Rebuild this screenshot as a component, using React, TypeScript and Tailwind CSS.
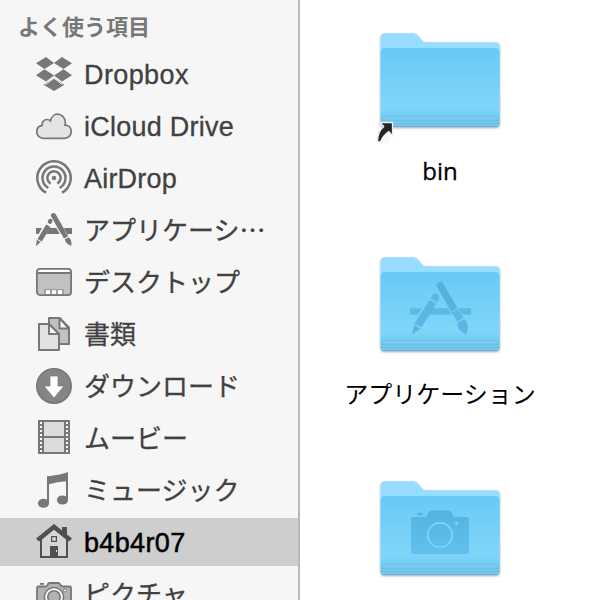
import React from "react";

const g = "#777777";

function DropboxIcon() {
  return (
    <g fill={g}>
      <path d="M10 7L18 13L8.5 19L0 13.3Z" />
      <path d="M26 7L18 13L27.5 19L36 13.3Z" />
      <path d="M8.5 19.3L18 25.5L10 31.5L0 25.3Z" />
      <path d="M27.5 19.3L18 25.5L26 31.5L36 25.3Z" />
      <path d="M18 28L28.5 34.8L18 41L7.5 34.8Z" />
      <path d="M7 32.4L10.2 34.2L18 28.2L25.8 34.2L29 32.4" fill="none" stroke="#f6f6f6" strokeWidth="1" />
    </g>
  );
}

function CloudIcon() {
  return (
    <path
      d="M7.5 36.8C3.5 36.8 .8 34 .8 30.3C.8 27 3 24.5 6.1 23.9C5.8 20.3 8.3 18 11 18C12.4 18 13.5 18.4 14.4 19.3C15.5 15.3 18.5 12.7 21.3 12.7C26 12.7 29.3 16.3 29.3 21C29.3 22.2 29.2 22.9 29 23.6C32.8 23.6 35.2 26.4 35.2 30C35.2 34 32.3 36.8 28.5 36.8Z"
      transform="translate(0 -.5)" fill="#e4e4e4" stroke={g} strokeWidth="1.7" />
  );
}

function AirDropIcon() {
  return (
    <g fill="none" stroke={g} strokeWidth="2.5">
      <path d="M10 38.7A16.7 16.7 0 1 1 26 38.7" />
      <path d="M12.3 34A11.5 11.5 0 1 1 23.7 34" />
      <path d="M14.6 29.6A6.6 6.6 0 1 1 21.4 29.6" />
      <circle cx="18" cy="24" r="2.2" fill={g} stroke="none" />
    </g>
  );
}

function AppsIcon() {
  return (
    <g>
      <path d="M0 22H36V28H0Z" fill={g} />
      <path d="M17.4 9.3L30 33M13.8 15L1.8 36" stroke="#f6f6f6" strokeWidth="6.6" />
      <path d="M17.5 9.5L27.2 26.6" stroke={g} strokeWidth="5" strokeLinecap="round" />
      <path d="M26.2 29.5L30.6 27.1L32.2 29.9L28 32.4Z" fill={g} />
      <path d="M29 33.3L32.6 31.2C35.3 33.4 35.7 36 35.4 39.7C31.8 38.6 29.2 36.8 29 33.3Z" fill={g} />
      <path d="M14.3 15L13.9 15.7" stroke={g} strokeWidth="4.4" strokeLinecap="round" />
      <path d="M10.2 18.5L14.5 20.9L5.8 35.6L1.5 33Z" fill={g} />
      <path d="M.8 33.8L4.6 36.1L0 40.2Z" fill={g} />
    </g>
  );
}

function DesktopIcon() {
  return (
    <g>
      <rect x=".9" y="10.9" width="34.2" height="26.2" rx="3" fill="#c1c1c1" />
      <path d="M1 15V13Q1 11 4 11H32Q35 11 35 13V15Z" fill="#fff" />
      <path d="M1.5 15H34.5" stroke={g} strokeWidth="2" />
      <path d="M8 31H28V37H8Z" fill="#a0a0a0" />
      <path d="M10 32.2H14V36H10ZM16 32.2H20V36H16ZM22 32.2H26V36H22Z" fill="#fff" />
      <rect x=".9" y="10.9" width="34.2" height="26.2" rx="3" fill="none" stroke={g} strokeWidth="1.8" />
    </g>
  );
}

function DocsIcon() {
  return (
    <g stroke={g} strokeWidth="2" strokeLinejoin="round">
      <path d="M13 8H23.5L33 17.5V34H13Z" fill="#c1c1c1" />
      <path d="M23.5 8V18.5H33Z" fill="#f6f6f6" />
      <path d="M3 14H13L23 24V40H3Z" fill="#e1e1e1" />
      <path d="M13 14V24H23Z" fill="#f6f6f6" />
    </g>
  );
}

function DownloadIcon() {
  return (
    <g>
      <circle cx="18" cy="24" r="17.2" fill="#858585" stroke={g} strokeWidth="1.6" />
      <path d="M14 14H22V24H28L18 36L8 24H14Z" fill="#fff" stroke={g} strokeWidth=".7" />
    </g>
  );
}

function MovieIcon() {
  return (
    <g>
      <path d="M2 6H34V40H2Z" fill={g} />
      <path d="M8 8H28V22H8ZM8 24H28V38H8Z" fill="#dcdcdc" />
      <path d="M5 8V39M31 8V39" stroke="#fff" strokeWidth="2" strokeDasharray="2 2" />
    </g>
  );
}

function MusicIcon() {
  return (
    <g fill={g}>
      <path d="M11 10.2C17 9.7 27 8.2 32 6V14.5L30 15.2C24 15.6 18 16.8 13 18.2V36H11Z" />
      <path d="M30 10H32V34H30Z" />
      <ellipse cx="7.5" cy="37.3" rx="5.6" ry="4.5" />
      <ellipse cx="26.5" cy="34" rx="5.6" ry="4.5" />
    </g>
  );
}

function HomeIcon() {
  return (
    <g>
      <path d="M5 21L18 10L31 21V39H5Z" fill="#d6d6d6" stroke="#505050" strokeWidth="2" />
      <path d="M26 9H31V19L26 14Z" fill="#505050" />
      <path d="M18 6L36 20.5L33 23.5L18 11.8L3 23.5L0 20.5Z" fill="#505050" />
      <path d="M15.6 18.6H20.4V23.4H15.6Z" fill="#d6d6d6" stroke="#505050" strokeWidth="1.2" />
      <path d="M14 28H22V39H14Z" fill="#505050" />
      <path d="M20 32H21V34H20Z" fill="#ddd" />
    </g>
  );
}

function CameraIcon() {
  return (
    <g>
      <path d="M4 14.8V13H8V14.8Z" fill={g} />
      <path d="M1 18Q1 16.5 2.5 16.5H9.5Q11 16.5 11.5 15L12 14Q12.5 13 14 13H22Q23.5 13 24.5 15Q25.5 16.5 27 16.5H33.5Q35 16.5 35 18V40H1Z" fill="#b2b2b2" stroke={g} strokeWidth="1.8" />
      <circle cx="18" cy="27" r="9.5" fill="#fff" stroke={g} strokeWidth="1.5" />
      <circle cx="18" cy="27" r="6.2" fill="#b2b2b2" stroke={g} strokeWidth="1.6" />
      <circle cx="29" cy="20.5" r="1.5" fill="#fff" stroke={g} />
    </g>
  );
}

const items = [
  { label: "Dropbox", icon: <DropboxIcon />, cls: "text-[27px] tracking-[0.4px]" },
  { label: "iCloud Drive", icon: <CloudIcon />, cls: "text-[27px] tracking-[0.25px]" },
  { label: "AirDrop", icon: <AirDropIcon />, cls: "text-[27px] tracking-[0.2px]" },
  { label: "アプリケーシ⋯", icon: <AppsIcon />, cls: "text-[26px]" },
  { label: "デスクトップ", icon: <DesktopIcon />, cls: "text-[26px]" },
  { label: "書類", icon: <DocsIcon />, cls: "text-[26px]" },
  { label: "ダウンロード", icon: <DownloadIcon />, cls: "text-[26px]" },
  { label: "ムービー", icon: <MovieIcon />, cls: "text-[26px]" },
  { label: "ミュージック", icon: <MusicIcon />, cls: "text-[26px]" },
  { label: "b4b4r07", icon: <HomeIcon />, cls: "text-[27px] tracking-[0.35px]", active: true },
  { label: "ピクチャ", icon: <CameraIcon />, cls: "text-[26px]" },
];

function AppsEmblem() {
  return (
    <g transform="translate(0 10)">
      <path d="M40 54.3H101V60.6H40Z" fill="#5cb9e5" />
      <path d="M70 31L93 71M65 41L46 73" stroke="#7bd2f9" strokeWidth="9" />
      <g fill="#5ab6e3">
        <path d="M70.3 31.5L84.5 56" stroke="#55b1df" strokeWidth="7.4" strokeLinecap="round" fill="none" />
        <path d="M81.4 58L87.9 54.2L93.6 64L87.3 67.6Z" />
        <path d="M87.8 68.7L94 65C99 69 98.3 74 96.5 80.3C91 78 87 75 87.8 68.7Z" />
        <path d="M62.2 41.3C63.5 39.5 65.6 39 67.5 40C69.3 41.2 69.8 43.5 68.8 45.2L67 48.4L60.2 44.6Z" />
        <path d="M59.6 45.6L66.5 49.5L51.2 73.6L44.5 69.8Z" />
        <path d="M44 70.8L50.6 74.6L42 80.5Z" />
      </g>
      <path d="M59.8 45L66.8 49M44.2 70.2L51 74.1M81.4 58.1L88 54.3M87.3 68.1L93.7 64.3" stroke="#82d5fa" strokeWidth="1" />
    </g>
  );
}

function CameraEmblem() {
  return (
    <g transform="translate(0 2)">
      <path d="M47 44.5Q47 42.8 48.8 42.8H51.2Q53 42.8 53 44.5V45.5H47Z" fill="#58b4e1" />
      <path d="M41 50Q41 47 44 47H55C57.5 47 57.5 44 59 42Q60 40.5 62 40.5H78Q80.5 40.5 81.5 42.5C83 45 83 47 86 47H96Q99 47 99 50V81Q99 84 96 84H44Q41 84 41 81Z" fill="url(#cam)" />
      <circle cx="70" cy="65" r="12.2" fill="none" stroke="#7bd2f9" strokeWidth="2" />
      <circle cx="86.5" cy="53.3" r="1.6" fill="#80d5fa" />
    </g>
  );
}

function Alias() {
  return (
    <g>
      <path d="M7 103H19V123H7Z" fill="#eeeeee" opacity=".45" />
      <path d="M10 102.5H22.5V116L18.8 111.5C13.8 115 12 118 10.5 122H7.5C7.5 115 9.5 110 13.8 106.5Z" fill="#20252a" stroke="#eee" strokeWidth="1.3" strokeLinejoin="round" />
    </g>
  );
}

function Folder({ label, cls = "", children }: { label?: string; cls?: string; children: React.ReactNode }) {
  return (
    <div className="flex h-[224px] shrink-0 flex-col items-center">
      <svg className="h-[130px] w-[140px] shrink-0" viewBox="0 0 140 130">
        <defs>
          <linearGradient id="front" x1="0" y1="0" x2="0" y2="1">
            <stop offset="0" stopColor="#69caf6" />
            <stop offset=".35" stopColor="#74cff7" />
            <stop offset=".72" stopColor="#80d5fa" />
            <stop offset=".86" stopColor="#77cdf3" />
            <stop offset="1" stopColor="#70c5eb" />
          </linearGradient>
          <linearGradient id="cam" x1="0" y1="0" x2="0" y2="1">
            <stop offset="0" stopColor="#56b3e1" />
            <stop offset="1" stopColor="#61c0ed" />
          </linearGradient>
          <filter id="shade" x="-10%" y="-10%" width="120%" height="125%">
            <feDropShadow dx="0" dy="1" stdDeviation="1" floodColor="#000" floodOpacity=".35" />
          </filter>
        </defs>
        <path filter="url(#shade)" d="M10.5 18Q10.5 13.3 15 13.3H43Q46.5 13.3 48.5 16.2L52 20.5Q53.5 22.3 56 22.3H125.5Q129.7 22.3 129.7 26.5V103.5Q129.7 107 126 107H14.5Q10.5 107 10.5 103.5Z" fill="#96ddff" />
        <path d="M10.5 32Q10.5 28 14.5 28H125.5Q129.7 28 129.7 32V103.5Q129.7 107 126 107H14.5Q10.5 107 10.5 103.5Z" fill="url(#front)" />
        <path d="M11 96.5H129.5M11 100.5H129.5M11 103.5H129.5" stroke="#62b8df" strokeWidth="1" opacity=".45" />
        <path d="M12 106.5H128" stroke="#5caed5" strokeWidth="1" opacity=".7" />
        {children}
      </svg>
      {label && <div className={"flex h-[42px] items-center whitespace-nowrap text-[24px] text-black " + cls}>{label}</div>}
    </div>
  );
}

export default function App() {
  return (
    <div className="flex h-[600px] w-[600px] overflow-hidden bg-white font-['Liberation_Sans','Noto_Sans_CJK_JP',sans-serif]">
      <aside className="flex w-[300px] shrink-0 flex-col overflow-hidden border-r-2 border-[#b8b8b8] bg-[#f6f6f6]">
        <div className="flex h-[50px] shrink-0 items-center pt-[5px] pl-[18px] text-[22px] font-bold text-[#777777]">よく使う項目</div>
        <ul className="flex flex-col gap-1">
          {items.map((it) => (
            <li
              key={it.label}
              className={
                "flex h-12 shrink-0 items-center gap-3 pl-9 " +
                (it.active ? "bg-[#cecece] text-black [-webkit-text-stroke:0.5px_black]" : "text-[#414141] [-webkit-text-stroke:0.3px_#414141]")
              }
            >
              <svg className="h-12 w-9 shrink-0" viewBox="0 0 36 48">{it.icon}</svg>
              <span className={"whitespace-nowrap pt-0.5 leading-[46px] " + it.cls}>{it.label}</span>
            </li>
          ))}
        </ul>
      </aside>
      <main className="flex w-[280px] flex-col overflow-hidden pt-5">
        <Folder label="bin" cls="font-['Open_Sans',sans-serif] [-webkit-text-stroke:0.3px_black]"><Alias /></Folder>
        <Folder label="アプリケーション"><AppsEmblem /></Folder>
        <Folder><CameraEmblem /></Folder>
      </main>
    </div>
  );
}
